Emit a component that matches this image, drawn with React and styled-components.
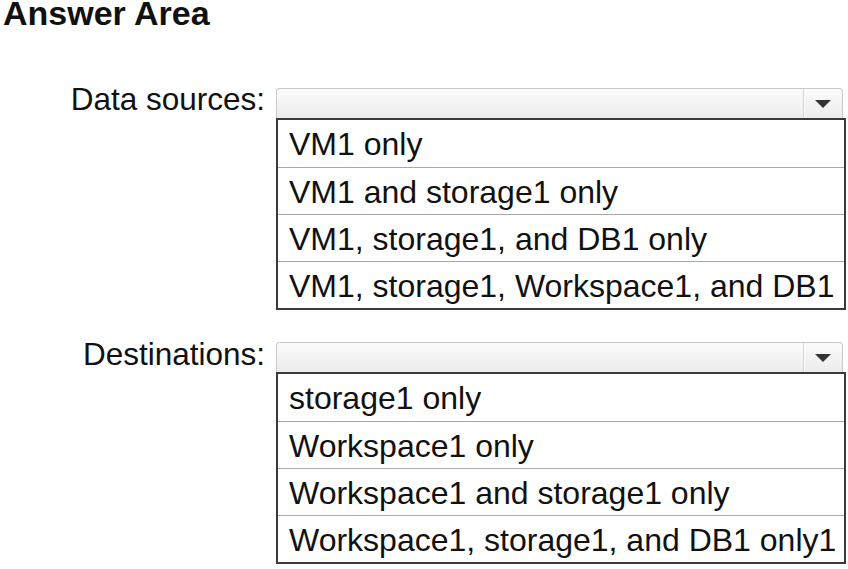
import styled, { createGlobalStyle } from 'styled-components';

const GlobalStyle = createGlobalStyle`
  body {
    margin: 0;
    background: #ffffff;
    font-family: "Liberation Sans", Arial, sans-serif;
    color: #111111;
  }
`;

const Page = styled.div`
  width: 848px;
  height: 569px;
  overflow: hidden;
  padding: 0 0 0 3px;
  box-sizing: border-box;
`;

const Title = styled.h1`
  margin: 0;
  font-size: 34px;
  line-height: 26px;
  font-weight: bold;
  color: #111111;
`;

const Groups = styled.div`
  display: flex;
  flex-direction: column;
  gap: 32px;
  margin-top: 62px;
`;

const Group = styled.div`
  display: grid;
  grid-template-columns: 262px 570px;
  column-gap: 11px;
  align-items: start;
`;

const Label = styled.div`
  text-align: right;
  font-size: 31.5px;
  line-height: 22px;
  padding-top: ${(p) => p.$offset || 0}px;
  white-space: nowrap;
`;

const Control = styled.div`
  display: flex;
  flex-direction: column;
`;

const Select = styled.div`
  width: 567px;
  height: 30px;
  box-sizing: border-box;
  display: flex;
  justify-content: flex-end;
  border: 1px solid #c9c9c9;
  border-bottom: none;
  border-radius: 4px 4px 0 0;
  background: linear-gradient(#fbfbfb, #ececec);
`;

const ArrowBox = styled.div`
  width: 38px;
  display: flex;
  align-items: center;
  justify-content: center;
  border-left: 1px solid #d2d2d2;
  box-shadow: inset 1px 0 0 #ffffff;
`;

const Arrow = styled.span`
  width: 0;
  height: 0;
  border-left: 8px solid transparent;
  border-right: 8px solid transparent;
  border-top: 8px solid #333333;
  margin-top: 1px;
`;

const List = styled.ul`
  list-style: none;
  margin: 0;
  padding: 0;
  border: 2px solid #3a3a3a;
  background: #ffffff;
`;

const Option = styled.li`
  height: 47px;
  padding: 2px 0 0 11px;
  box-sizing: border-box;
  font-size: 32px;
  line-height: 44px;
  white-space: nowrap;
  & + & {
    border-top: 1px solid #a8a8a8;
    height: 47px;
  }
`;

const groups = [
  {
    label: 'Data sources:',
    offset: 0,
    options: [
      'VM1 only',
      'VM1 and storage1 only',
      'VM1, storage1, and DB1 only',
      'VM1, storage1, Workspace1, and DB1',
    ],
  },
  {
    label: 'Destinations:',
    offset: 1,
    options: [
      'storage1 only',
      'Workspace1 only',
      'Workspace1 and storage1 only',
      'Workspace1, storage1, and DB1 only1',
    ],
  },
];

export default function App() {
  return (
    <>
      <GlobalStyle />
      <Page>
        <Title>Answer Area</Title>
        <Groups>
          {groups.map(({ label, offset, options }) => (
            <Group key={label}>
              <Label $offset={offset}>{label}</Label>
              <Control>
                <Select>
                  <ArrowBox>
                    <Arrow />
                  </ArrowBox>
                </Select>
                <List>
                  {options.map((text) => (
                    <Option key={text}>{text}</Option>
                  ))}
                </List>
              </Control>
            </Group>
          ))}
        </Groups>
      </Page>
    </>
  );
}
